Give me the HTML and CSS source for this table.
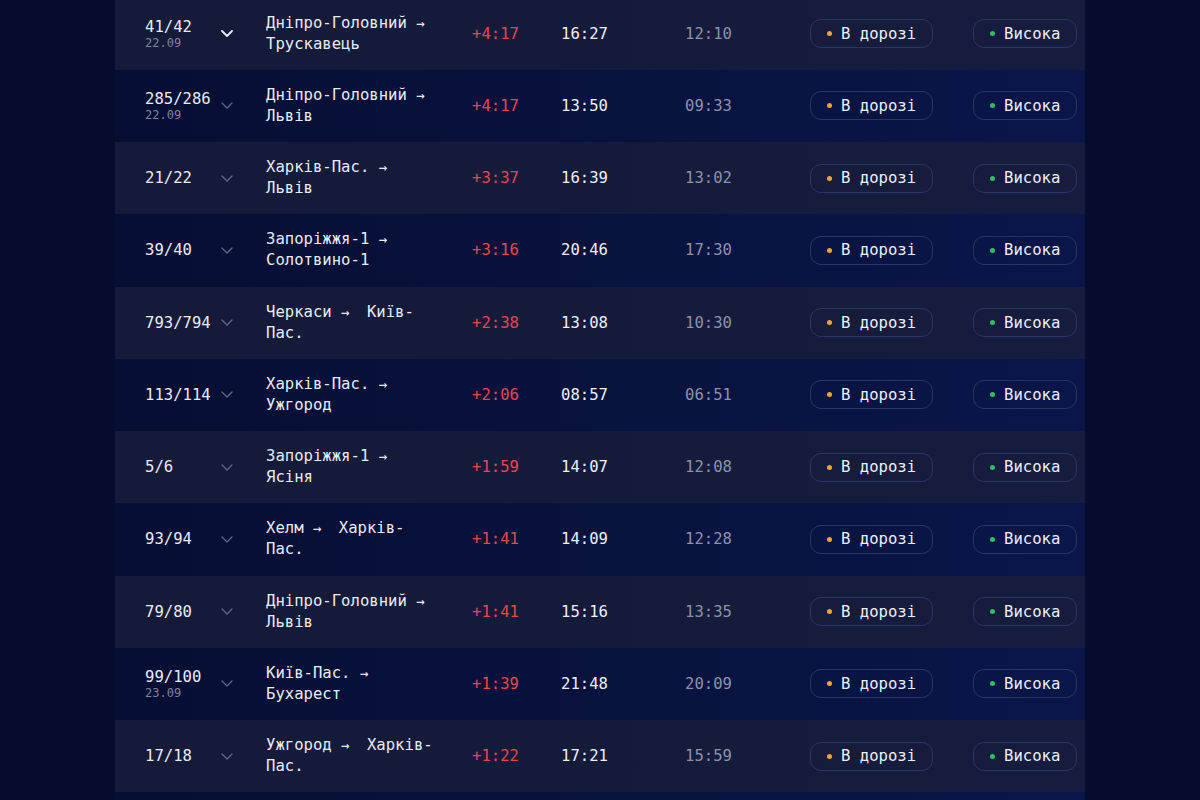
FILE: index.html
```html
<!DOCTYPE html>
<html lang="uk">
<head>
<meta charset="utf-8">
<title>Затримки поїздів</title>
<link rel="stylesheet" href="styles.css">
</head>
<body>
<div class="table">
  <div class="row odd">
    <div class="c-num"><div class="num"><span class="n">41/42</span><span class="d">22.09</span></div><svg class="chev open" viewBox="0 0 12 7"><path d="M1 1l5 5 5-5"/></svg></div>
    <div class="c-route"><span class="route">Дніпро-Головний <span class="arr">→</span> Трускавець</span></div>
    <div class="c-delay">+4:17</div>
    <div class="c-t1">16:27</div>
    <div class="c-t2">12:10</div>
    <div class="c-st"><span class="pill"><i class="dot orange"></i>В дорозі</span></div>
    <div class="c-q"><span class="pill"><i class="dot green"></i>Висока</span></div>
  </div>
  <div class="row even">
    <div class="c-num"><div class="num"><span class="n">285/286</span><span class="d">22.09</span></div><svg class="chev" viewBox="0 0 12 7"><path d="M1 1l5 5 5-5"/></svg></div>
    <div class="c-route"><span class="route">Дніпро-Головний <span class="arr">→</span> Львів</span></div>
    <div class="c-delay">+4:17</div>
    <div class="c-t1">13:50</div>
    <div class="c-t2">09:33</div>
    <div class="c-st"><span class="pill"><i class="dot orange"></i>В дорозі</span></div>
    <div class="c-q"><span class="pill"><i class="dot green"></i>Висока</span></div>
  </div>
  <div class="row odd">
    <div class="c-num"><div class="num"><span class="n">21/22</span></div><svg class="chev" viewBox="0 0 12 7"><path d="M1 1l5 5 5-5"/></svg></div>
    <div class="c-route"><span class="route">Харків-Пас. <span class="arr">→</span> Львів</span></div>
    <div class="c-delay">+3:37</div>
    <div class="c-t1">16:39</div>
    <div class="c-t2">13:02</div>
    <div class="c-st"><span class="pill"><i class="dot orange"></i>В дорозі</span></div>
    <div class="c-q"><span class="pill"><i class="dot green"></i>Висока</span></div>
  </div>
  <div class="row even">
    <div class="c-num"><div class="num"><span class="n">39/40</span></div><svg class="chev" viewBox="0 0 12 7"><path d="M1 1l5 5 5-5"/></svg></div>
    <div class="c-route"><span class="route">Запоріжжя-1 <span class="arr">→</span> Солотвино-1</span></div>
    <div class="c-delay">+3:16</div>
    <div class="c-t1">20:46</div>
    <div class="c-t2">17:30</div>
    <div class="c-st"><span class="pill"><i class="dot orange"></i>В дорозі</span></div>
    <div class="c-q"><span class="pill"><i class="dot green"></i>Висока</span></div>
  </div>
  <div class="row odd">
    <div class="c-num"><div class="num"><span class="n">793/794</span></div><svg class="chev" viewBox="0 0 12 7"><path d="M1 1l5 5 5-5"/></svg></div>
    <div class="c-route"><span class="route">Черкаси <span class="arr">→</span> Київ-Пас.</span></div>
    <div class="c-delay">+2:38</div>
    <div class="c-t1">13:08</div>
    <div class="c-t2">10:30</div>
    <div class="c-st"><span class="pill"><i class="dot orange"></i>В дорозі</span></div>
    <div class="c-q"><span class="pill"><i class="dot green"></i>Висока</span></div>
  </div>
  <div class="row even">
    <div class="c-num"><div class="num"><span class="n">113/114</span></div><svg class="chev" viewBox="0 0 12 7"><path d="M1 1l5 5 5-5"/></svg></div>
    <div class="c-route"><span class="route">Харків-Пас. <span class="arr">→</span> Ужгород</span></div>
    <div class="c-delay">+2:06</div>
    <div class="c-t1">08:57</div>
    <div class="c-t2">06:51</div>
    <div class="c-st"><span class="pill"><i class="dot orange"></i>В дорозі</span></div>
    <div class="c-q"><span class="pill"><i class="dot green"></i>Висока</span></div>
  </div>
  <div class="row odd">
    <div class="c-num"><div class="num"><span class="n">5/6</span></div><svg class="chev" viewBox="0 0 12 7"><path d="M1 1l5 5 5-5"/></svg></div>
    <div class="c-route"><span class="route">Запоріжжя-1 <span class="arr">→</span> Ясіня</span></div>
    <div class="c-delay">+1:59</div>
    <div class="c-t1">14:07</div>
    <div class="c-t2">12:08</div>
    <div class="c-st"><span class="pill"><i class="dot orange"></i>В дорозі</span></div>
    <div class="c-q"><span class="pill"><i class="dot green"></i>Висока</span></div>
  </div>
  <div class="row even">
    <div class="c-num"><div class="num"><span class="n">93/94</span></div><svg class="chev" viewBox="0 0 12 7"><path d="M1 1l5 5 5-5"/></svg></div>
    <div class="c-route"><span class="route">Хелм <span class="arr">→</span> Харків-Пас.</span></div>
    <div class="c-delay">+1:41</div>
    <div class="c-t1">14:09</div>
    <div class="c-t2">12:28</div>
    <div class="c-st"><span class="pill"><i class="dot orange"></i>В дорозі</span></div>
    <div class="c-q"><span class="pill"><i class="dot green"></i>Висока</span></div>
  </div>
  <div class="row odd">
    <div class="c-num"><div class="num"><span class="n">79/80</span></div><svg class="chev" viewBox="0 0 12 7"><path d="M1 1l5 5 5-5"/></svg></div>
    <div class="c-route"><span class="route">Дніпро-Головний <span class="arr">→</span> Львів</span></div>
    <div class="c-delay">+1:41</div>
    <div class="c-t1">15:16</div>
    <div class="c-t2">13:35</div>
    <div class="c-st"><span class="pill"><i class="dot orange"></i>В дорозі</span></div>
    <div class="c-q"><span class="pill"><i class="dot green"></i>Висока</span></div>
  </div>
  <div class="row even">
    <div class="c-num"><div class="num"><span class="n">99/100</span><span class="d">23.09</span></div><svg class="chev" viewBox="0 0 12 7"><path d="M1 1l5 5 5-5"/></svg></div>
    <div class="c-route"><span class="route">Київ-Пас. <span class="arr">→</span> Бухарест</span></div>
    <div class="c-delay">+1:39</div>
    <div class="c-t1">21:48</div>
    <div class="c-t2">20:09</div>
    <div class="c-st"><span class="pill"><i class="dot orange"></i>В дорозі</span></div>
    <div class="c-q"><span class="pill"><i class="dot green"></i>Висока</span></div>
  </div>
  <div class="row odd">
    <div class="c-num"><div class="num"><span class="n">17/18</span></div><svg class="chev" viewBox="0 0 12 7"><path d="M1 1l5 5 5-5"/></svg></div>
    <div class="c-route"><span class="route">Ужгород <span class="arr">→</span> Харків-Пас.</span></div>
    <div class="c-delay">+1:22</div>
    <div class="c-t1">17:21</div>
    <div class="c-t2">15:59</div>
    <div class="c-st"><span class="pill"><i class="dot orange"></i>В дорозі</span></div>
    <div class="c-q"><span class="pill"><i class="dot green"></i>Висока</span></div>
  </div>
  <div class="row even tail"></div>
</div>
</body>
</html>
```

FILE: styles.css
```css
html, body {
  margin: 0;
  padding: 0;
  background: #050c2e;
  overflow: hidden;
}

body {
  font-family: "DejaVu Sans Mono", "Liberation Mono", monospace;
  font-size: 15.6px;
  color: #e9ecf6;
}

.table {
  width: 970px;
  margin: -2.5px auto 0;
}

.row {
  display: grid;
  grid-template-columns: 151px 206px 89px 124px 125px 163px 112px;
  align-items: center;
  height: 72.25px;
}

.row.tail {
  height: 12px;
}

.row.odd {
  background: linear-gradient(90deg, #141a38 0%, #151c3d 100%);
}

.row.even {
  background: linear-gradient(90deg, #060e32 0%, #081340 60%, #0a1649 100%);
}

.c-num {
  display: flex;
  align-items: center;
  padding-left: 30px;
}

.num {
  display: flex;
  flex-direction: column;
  width: 76px;
}

.n {
  line-height: 20px;
}

.d {
  font-size: 12px;
  line-height: 13px;
  color: #7c84a3;
}

.chev {
  width: 12px;
  height: 7px;
  fill: none;
  stroke: #5f6889;
  stroke-width: 1.3;
  stroke-linecap: round;
  stroke-linejoin: round;
}

.chev.open {
  stroke: #e9ecf6;
  stroke-width: 1.8;
}

.route {
  display: block;
  max-width: 168px;
  line-height: 21px;
}

.arr {
  font-size: 14px;
  line-height: 14px;
  margin-right: 8px;
}

.c-delay {
  color: #e6464f;
}

.c-t1 {
  color: #eef0f8;
}

.c-t2 {
  color: #8a92ae;
}

.pill {
  display: inline-flex;
  align-items: center;
  height: 27px;
  padding: 0 16px;
  border: 1px solid #2b3562;
  border-radius: 11px;
  color: #eef0f8;
}

.dot {
  display: inline-block;
  width: 5px;
  height: 5px;
  border-radius: 50%;
  margin-right: 9px;
}

.dot.orange {
  background: #f0a23a;
}

.dot.green {
  background: #22c55e;
}
```
